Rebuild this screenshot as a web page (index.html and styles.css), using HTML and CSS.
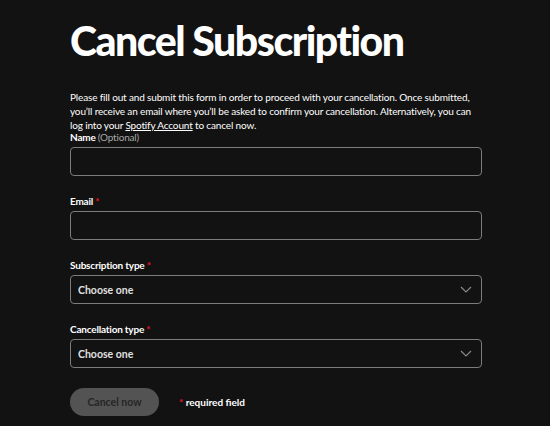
FILE: index.html
```html
<!DOCTYPE html>
<html lang="en">
<head>
<meta charset="utf-8">
<title>Cancel Subscription</title>
<link rel="stylesheet" href="styles.css">
</head>
<body>
<main class="page">
  <h1 class="title">Cancel Subscription</h1>
  <p class="intro">Please fill out and submit this form in order to proceed with your cancellation. Once submitted, you’ll receive an email where you’ll be asked to confirm your cancellation. Alternatively, you can log into your <a class="link" href="#">Spotify Account</a> to cancel now.</p>
  <form class="form">
    <div class="field">
      <label class="label">Name <span class="optional">(Optional)</span></label>
      <div class="input"></div>
    </div>
    <div class="field">
      <label class="label">Email <span class="req">*</span></label>
      <div class="input"></div>
    </div>
    <div class="field">
      <label class="label">Subscription type <span class="req">*</span></label>
      <div class="input select">
        <span class="select-text">Choose one</span>
        <svg class="chev" width="12" height="7" viewBox="0 0 12 7"><path d="M1 1l5 5 5-5" fill="none" stroke="#8a8a8a" stroke-width="1.2"/></svg>
      </div>
    </div>
    <div class="field">
      <label class="label">Cancellation type <span class="req">*</span></label>
      <div class="input select">
        <span class="select-text">Choose one</span>
        <svg class="chev" width="12" height="7" viewBox="0 0 12 7"><path d="M1 1l5 5 5-5" fill="none" stroke="#8a8a8a" stroke-width="1.2"/></svg>
      </div>
    </div>
    <div class="actions">
      <button type="button" class="btn">Cancel now</button>
      <span class="note"><span class="req">*</span> required field</span>
    </div>
  </form>
</main>
</body>
</html>
```
FILE: styles.css
```css
html, body {
  margin: 0;
  padding: 0;
  background: #121212;
}
body {
  font-family: Lato, "Noto Sans", sans-serif;
  color: #ffffff;
}
.page {
  width: 412px;
  padding: 14px 0 0 70px;
}
.title {
  margin: 0;
  font-size: 41px;
  font-weight: 900;
  letter-spacing: -1.5px;
  line-height: 54px;
  color: #ffffff;
}
.intro {
  margin: 22px 0 0 0;
  font-size: 10px;
  line-height: 14px;
  letter-spacing: -0.15px;
  color: #ffffff;
}
.link {
  color: #ffffff;
  text-decoration: underline;
}
.form {
  display: flex;
  flex-direction: column;
  gap: 20px;
}
.field {
  display: flex;
  flex-direction: column;
  align-items: flex-start;
  gap: 4px;
}
.label {
  font-size: 10px;
  font-weight: 700;
  line-height: 11px;
  letter-spacing: -0.2px;
}
.optional {
  font-weight: 400;
  color: #a7a7a7;
}
.req {
  color: #e91429;
  font-weight: 700;
}
.input {
  box-sizing: border-box;
  align-self: stretch;
  height: 29px;
  border: 1px solid #7c7c7c;
  border-radius: 4px;
  background: #121212;
}
.select {
  display: flex;
  align-items: center;
  justify-content: space-between;
  padding: 0 9px 0 7px;
}
.select-text {
  font-size: 10.5px;
  font-weight: 700;
  color: #e0e0e0;
}
.actions {
  display: flex;
  align-items: center;
  gap: 20px;
  margin-top: 0;
}
.btn {
  width: 89px;
  height: 28px;
  border: none;
  border-radius: 14px;
  background: #535353;
  color: #262626;
  font-family: inherit;
  font-size: 10.5px;
  font-weight: 700;
  padding: 0;
}
.note {
  font-size: 10px;
  font-weight: 700;
  color: #ffffff;
}
```
